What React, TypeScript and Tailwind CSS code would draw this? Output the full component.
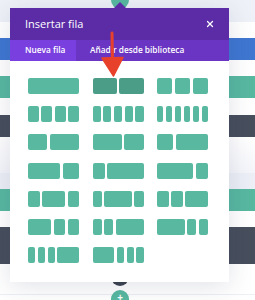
import { X } from "lucide-react";

type Layout = number[];

// each column layout = list of flex ratios
const LAYOUTS: Layout[] = [
  [1],
  [1, 1],
  [1, 1, 1],
  [1, 1, 1, 1],
  [1, 1, 1, 1, 1],
  [1, 1, 1, 1, 1, 1],
  [2, 3],
  [3, 2],
  [1, 2],
  [2, 1],
  [1, 3],
  [3, 1],
  [1, 2, 1],
  [1, 3, 1],
  [1, 1, 2],
  [2, 1, 1],
  [1, 1, 3],
  [3, 1, 1],
  [1, 1, 1, 3],
  [3, 1, 1, 1],
];

function RowOption({ cols, active }: { cols: Layout; active?: boolean }) {
  return (
    <div className="flex h-[16px] gap-[2.5px]">
      {cols.map((c, i) => (
        <div
          key={i}
          className={`h-full rounded-[2px] ${active ? "bg-[#4b9d88]" : "bg-[#58b9a0]"}`}
          style={{ flex: `${c} 1 0px` }}
        />
      ))}
    </div>
  );
}

export default function App() {
  return (
    <div
      className="relative w-[255px] h-[300px] overflow-hidden bg-white"
      style={{ fontFamily: '"Open Sans", "Liberation Sans", sans-serif' }}
    >
      {/* builder page behind the modal */}
      <div className="flex flex-col">
        <div className="h-[22px] bg-[#eef1f7]" />
        <div className="h-[16px] bg-white" />
        <div className="h-[22px] bg-[#3f77d1]" />
        <div className="h-[16px] bg-white" />
        <div className="h-[22px] bg-[#57b8a0]" />
        <div className="h-[17px] bg-white" />
        <div className="h-[22px] bg-[#474e5c]" />
        <div className="h-[36px] bg-gradient-to-b from-white to-[#f4f5fa]" />
        <div className="h-[16px] bg-[#eceff6]" />
        <div className="h-[22px] bg-[#57b8a0]" />
        <div className="h-[16px] bg-white" />
        <div className="h-[37px] bg-[#474e5c]" />
        <div className="h-[31px] bg-white border-b border-[#eceff4]" />
      </div>

      {/* add-row buttons */}
      <div className="absolute left-[111px] top-[-9px] w-[18px] h-[18px] rounded-full bg-[#57b8a0]" />
      <div className="absolute left-[111px] top-[268px] w-[18px] h-[18px] rounded-full bg-[#3b4250]" />
      <div className="absolute left-[111px] top-[290px] w-[18px] h-[18px] rounded-full bg-[#57b8a0] flex justify-center pt-[2px] text-white text-[10px] leading-none font-bold">
        +
      </div>

      {/* modal */}
      <div className="absolute left-[10px] top-[8px] w-[219px] h-[274px] bg-white shadow-[0_4px_24px_rgba(40,50,90,0.14)]">
        <div className="absolute left-[104px] top-[-6px] w-0 h-0 border-x-[6px] border-x-transparent border-b-[6px] border-b-[#5b2ca6]" />
        <div className="h-[32px] bg-[#5b2ca6] flex items-center justify-between pl-[15px] pr-[14px] text-white">
          <span className="text-[11px] font-medium">Insertar fila</span>
          <X size={10} strokeWidth={3} />
        </div>
        <div className="h-[21px] bg-[#6b35c3] flex text-white text-[8.3px] font-semibold">
          <div className="w-[66px] bg-[#7a3fdf] flex items-center pl-[15px]">Nueva fila</div>
          <div className="flex items-center pl-[14px]">Añadir desde biblioteca</div>
        </div>
        <div className="grid grid-cols-[51px_51px_51px] gap-x-[13.5px] gap-y-[12.2px] pl-[18px] pt-[17px]">
          {LAYOUTS.map((l, i) => (
            <RowOption key={i} cols={l} active={i === 1} />
          ))}
        </div>
      </div>

      {/* red annotation arrow */}
      <svg className="absolute left-0 top-0" width="255" height="300" viewBox="0 0 255 300">
        <path d="M112 33 L112.5 62" stroke="#e8412b" strokeWidth="3" strokeLinecap="round" fill="none" />
        <path d="M102 58 L123 57.5 L113.5 76 Z" fill="#e8412b" stroke="#e8412b" strokeWidth="1.5" strokeLinejoin="round" />
      </svg>
    </div>
  );
}
